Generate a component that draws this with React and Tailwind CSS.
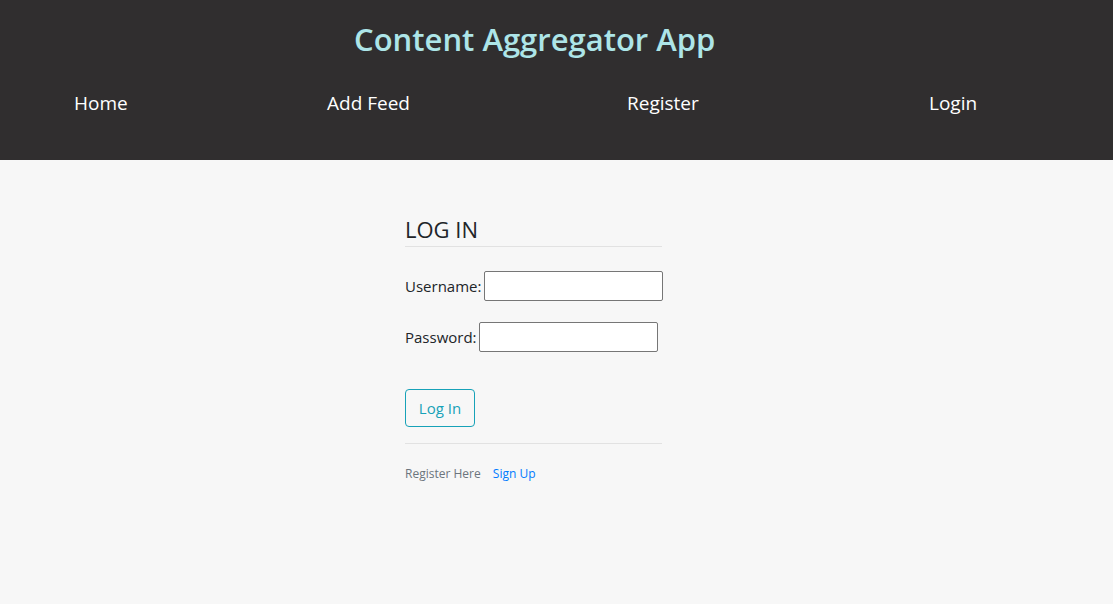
export default function App() {
  return (
    <div className="min-h-[604px] bg-[#f7f7f7] font-['Open_Sans',sans-serif]">
      <header className="h-[160px] bg-[#302e2f]">
        <h1 className="pt-[18px] pl-[354px] text-[31px] leading-[42px] font-semibold text-[#ade5e8]">
          Content Aggregator App
        </h1>
        <nav className="flex pl-[74px] pt-[30px] text-[19px] leading-[26px] text-white">
          <a className="w-[253px]">Home</a>
          <a className="w-[300px]">Add Feed</a>
          <a className="w-[302px]">Register</a>
          <a>Login</a>
        </nav>
      </header>
      <main className="pl-[405px] pt-[54px]">
        <div className="w-[257px]">
          <h2 className="text-[22px] leading-[30px] text-[#212529] border-b border-[#e2e2e2] pb-[2px]">LOG IN</h2>
          <div className="mt-[24px] flex items-center gap-[3px] text-[15px] text-[#212529]">
            <label>Username:</label>
            <input className="w-[179px] h-[30px] bg-white border border-[#767676] rounded-[2px]" />
          </div>
          <div className="mt-[21px] flex items-center gap-[2px] text-[15px] text-[#212529]">
            <label>Password:</label>
            <input type="password" className="w-[179px] h-[30px] bg-white border border-[#767676] rounded-[2px]" />
          </div>
          <button className="mt-[37px] h-[38px] w-[70px] border border-[#17a2b8] rounded-[4px] text-[15px] text-[#17a2b8]">
            Log In
          </button>
          <div className="mt-[16px] border-t border-[#e2e2e2] pt-[21px] text-[12px] text-[#6c757d]">
            Register Here <a className="ml-[9px] text-[#007bff]">Sign Up</a>
          </div>
        </div>
      </main>
    </div>
  );
}
